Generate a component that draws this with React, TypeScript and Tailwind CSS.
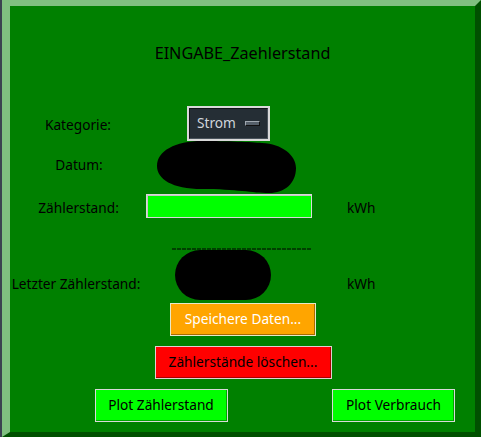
import React from "react";

const font = { fontFamily: '"Noto Sans", "DejaVu Sans", sans-serif' };

function Label({ children, className = "" }: { children: React.ReactNode; className?: string }) {
  return <div className={"flex justify-center whitespace-nowrap text-[13.7px] leading-[18px] text-black " + className}>{children}</div>;
}

export default function App() {
  return (
    <div className="flex h-[437px] w-[481px] bg-[#3b4350]" style={font}>
      <div className="ml-[2px] flex h-[437px] w-[479px] flex-col border-b-[5px] border-l-[8px] border-r-[6px] border-t-[6px] border-b-[#005000] border-l-[#80c080] border-r-[#005000] border-t-[#80c080] bg-[#008000]">
        {/* title */}
        <div className="flex h-[99px] justify-center pt-[36px] text-[16.2px] leading-[22px] text-black">
          EINGABE_Zaehlerstand
        </div>

        {/* Kategorie */}
        <div className="grid h-[36px] grid-cols-[136px_166px_1fr] items-center">
          <Label className="mt-[3px]">Kategorie:</Label>
          <div className="pl-[41px]">
            <div className="flex h-[35px] w-[83px] border-2 border-[#d9d9d9] bg-[#d9d9d9]">
              <div className="flex flex-1 items-center justify-between border border-t-[#111418] border-l-[#111418] border-b-[#4a545c] border-r-[#4a545c] bg-[#252e35] pl-[7px] pr-[7px]">
                <span className="text-[13.7px] leading-[18px] text-[#d0d6dc]">Strom</span>
                <span className="h-[5px] w-[15px] border border-t-[#a0a8b0] border-l-[#a0a8b0] border-b-[#111] border-r-[#111] bg-[#56606a]" />
              </div>
            </div>
          </div>
          <div />
        </div>

        {/* Datum */}
        <div className="grid h-[52px] grid-cols-[136px_166px_1fr] items-center">
          <Label className="mb-[4px] pl-[2px]">Datum:</Label>
          <div className="pl-[11px]">
            <svg width="140" height="52" viewBox="0 0 140 52">
              <path
                d="M45 0 C70 0 95 1 105 2 C125 3 139 14 139 27 C139 42 128 52 112 52 C95 52 80 48 45 48 C15 48 0 38 0 25 C0 10 18 0 45 0 Z"
                fill="#000"
              />
            </svg>
          </div>
          <div />
        </div>

        {/* Zählerstand */}
        <div className="grid h-[26px] grid-cols-[136px_166px_1fr] items-center">
          <Label className="mt-[4px] pl-[1px]">Zählerstand:</Label>
          <div className="h-[24px] w-[166px] border border-[#d9d9d9] bg-[#00ff00] shadow-[inset_1px_1px_0_#c8c8c8]" />
          <div className="mt-[4px] pl-[35px] text-[13.7px] leading-[18px] text-black">kWh</div>
        </div>

        {/* dashes */}
        <div className="grid h-[31px] grid-cols-[136px_166px_1fr] items-end">
          <div />
          <div className="pl-[26px]">
            <svg width="140" height="2" viewBox="0 0 140 2" className="block">
              <line x1="0" y1="1" x2="140" y2="1" stroke="#000" strokeWidth="1" strokeDasharray="4 1" />
            </svg>
          </div>
          <div />
        </div>

        {/* Letzter Zählerstand */}
        <div className="grid h-[53px] grid-cols-[136px_166px_1fr] items-start">
          <Label className="mt-[25px] pr-[4px]">Letzter Zählerstand:</Label>
          <div className="pl-[29px]">
            <svg width="96" height="50" viewBox="0 0 96 50" className="block">
              <rect x="0" y="0" width="96" height="50" rx="25" fill="#000" />
            </svg>
          </div>
          <div className="mt-[25px] pl-[35px] text-[13.7px] leading-[18px] text-black">kWh</div>
        </div>

        {/* Speichere */}
        <div className="flex h-[43px] justify-center">
          <button className="ml-[1px] h-[33px] w-[146px] border border-[#e8e8c8] bg-[#ffa500] text-[13.7px] text-white shadow-[inset_-1px_-1px_0_#a86c00]">
            Speichere Daten...
          </button>
        </div>

        {/* löschen */}
        <div className="flex h-[43px] justify-center">
          <button className="ml-[1px] h-[33px] w-[177px] border border-[#e0d0d0] bg-[#ff0000] text-[13.7px] text-black shadow-[inset_-1px_-1px_0_#a80000]">
            Zählerstände löschen...
          </button>
        </div>

        {/* plots */}
        <div className="grid h-[33px] grid-cols-[302px_1fr]">
          <div className="flex justify-center">
            <button className="h-[33px] w-[133px] border border-[#d9d9d9] bg-[#00ff00] text-[13.7px] text-black shadow-[inset_-1px_-1px_0_#00a800]">
              Plot Zählerstand
            </button>
          </div>
          <div className="flex justify-center">
            <button className="h-[33px] w-[123px] border border-[#d9d9d9] bg-[#00ff00] text-[13.7px] text-black shadow-[inset_-1px_-1px_0_#00a800]">
              Plot Verbrauch
            </button>
          </div>
        </div>
      </div>
    </div>
  );
}
